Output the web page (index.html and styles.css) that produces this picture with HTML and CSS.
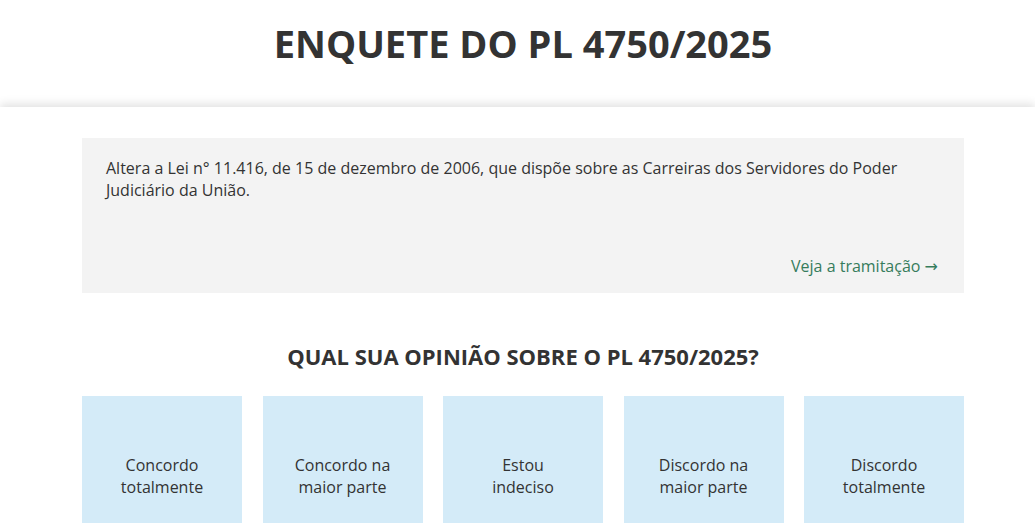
FILE: index.html
```html
<!doctype html>
<html lang="pt-br">
<head>
    <meta charset="utf-8">
    <meta name="viewport" content="width=device-width, initial-scale=1.0">
    <title>Enquete do PL 4750/2025</title>
    <link rel="stylesheet" href="styles.css">
</head>
<body>
    <header class="page-header">
        <h1>ENQUETE DO PL 4750/2025</h1>
    </header>
    <main class="content">
        <div class="container">
            <div class="ementa">
                <p>Altera a Lei n° 11.416, de 15 de dezembro de 2006, que dispõe sobre as Carreiras dos Servidores do Poder Judiciário da União.</p>
                <a href="#" class="tramitacao">Veja a tramitação <span class="seta">→</span></a>
            </div>
            <h2 class="pergunta">QUAL SUA OPINIÃO SOBRE O PL 4750/2025?</h2>
            <div class="opcoes">
                <button class="opcao">Concordo<br>totalmente</button>
                <button class="opcao">Concordo na<br>maior parte</button>
                <button class="opcao">Estou<br>indeciso</button>
                <button class="opcao">Discordo na<br>maior parte</button>
                <button class="opcao">Discordo<br>totalmente</button>
            </div>
        </div>
    </main>
</body>
</html>
```

FILE: styles.css
```css
body {
    font-family: "Open Sans", "Liberation Sans", sans-serif;
    color: #333;
    background-color: #fff;
    margin: 0;
    padding: 0 0 0 11px;
    overflow: hidden;
}
.page-header {
    height: 107px;
    padding-top: 18px;
    box-sizing: border-box;
    text-align: center;
}
.page-header h1 {
    margin: 0;
    font-size: 38px;
    font-weight: 700;
    line-height: 50px;
    color: #333;
}
.content {
    position: relative;
    margin-left: -11px;
    padding-left: 11px;
    padding-top: 31px;
    background-color: #fff;
    box-shadow: 0 -3px 9px rgba(0, 0, 0, 0.12);
}
.container {
    width: 882px;
    margin: 0 auto;
}
.ementa {
    background-color: #f3f3f3;
    padding: 19px 26px 15px 24px;
    height: 155px;
    box-sizing: border-box;
    display: flex;
    flex-direction: column;
}
.ementa p {
    margin: 0;
    font-size: 16px;
    line-height: 22px;
    color: #333;
}
.tramitacao {
    margin-top: auto;
    align-self: flex-end;
    font-size: 16px;
    line-height: 22px;
    color: #367c5c;
    text-decoration: none;
}
.seta {
    font-family: "DejaVu Sans", sans-serif;
    font-size: 16px;
}
.pergunta {
    margin: 49px 0 26px;
    text-align: center;
    font-size: 22px;
    font-weight: 700;
    line-height: 28px;
    color: #333;
}
.opcoes {
    display: grid;
    grid-template-columns: repeat(5, 160px);
    justify-content: space-between;
}
.opcao {
    height: 160px;
    border: none;
    background-color: #d4ebf8;
    font-family: inherit;
    font-size: 16px;
    line-height: 22px;
    color: #333;
    cursor: pointer;
    padding: 0;
}
.opcao:hover {
    background-color: #c2e2f4;
}
```
